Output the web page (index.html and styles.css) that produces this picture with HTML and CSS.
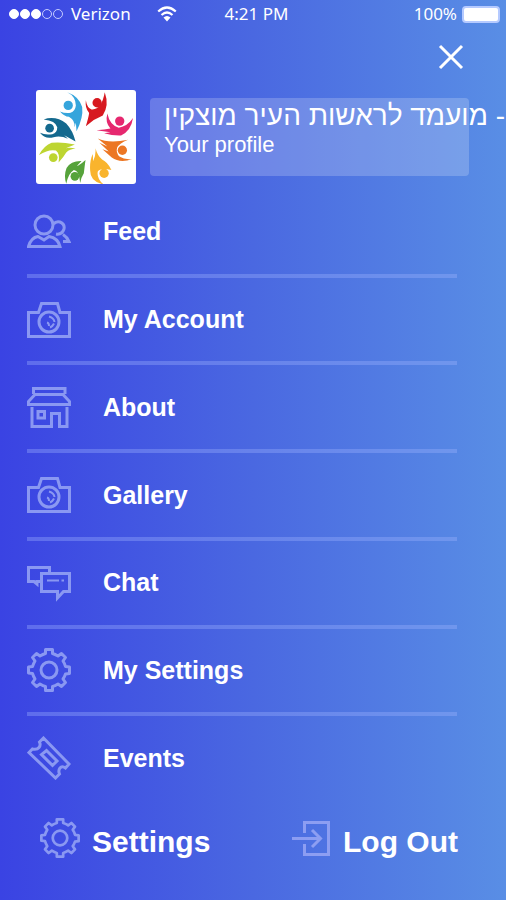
FILE: index.html
```html
<!DOCTYPE html>
<html lang="en">
<head>
<meta charset="utf-8">
<meta name="viewport" content="width=device-width, initial-scale=1">
<title>Menu</title>
<link rel="stylesheet" href="styles.css">
</head>
<body>
<svg class="symbols" aria-hidden="true">
  <symbol id="camera" viewBox="0 0 44 44">
    <path d="M1.5 14.500H11.500L14.500 5.500H30.500L33 14.500H42.500V38.500H1.500Z"/>
    <circle cx="22" cy="24" r="10"/>
    <path d="M22 18.500Q27 20 27.500 24M27 25.500Q25.500 28.500 23 29.500M20 24.500Q22 25 22 28" stroke-width="2"/>
  </symbol>
  <symbol id="gear" viewBox="0 0 44 44">
    <path stroke-linejoin="round" d="M18.500 5.500V1.500H25.500V5.500Q28 6.200 31 8L34.500 5.500L38.500 9.500L36 13Q38 16 38.500 18.500L42.500 19V25.500L38.500 26Q37.500 29 36 31L38.500 34.500L34.500 38.500L31 36Q28 38 25.500 38.500V42.500H18.500V38.500Q16 38 13 36L9.500 38.500L5.500 34.500L8 31Q6.200 28 5.500 25.500L1.500 25V19L5.500 18.500Q6.200 16 8 13L5.500 9.500L9.500 5.500L13 8Q16 6.200 18.500 5.500Z"/>
    <circle cx="22" cy="22" r="8"/>
  </symbol>
</svg>

<header class="status">
  <div class="carrier">
    <span class="signal"><i class="dot full"></i><i class="dot full"></i><i class="dot full"></i><i class="dot"></i><i class="dot"></i></span>
    <span>Verizon</span>
    <svg class="wifi" viewBox="0 0 20 16" aria-hidden="true">
      <path d="M1.200 5.500Q10 -2.500 18.800 5.500M4.500 9Q10 4 15.500 9" fill="none" stroke="#fff" stroke-width="2.200"/>
      <path d="M6.500 11.500Q10 8.500 13.500 11.500L10 15.500Z" fill="#fff"/>
    </svg>
  </div>
  <span class="time">4:21 PM</span>
  <div class="power"><span>100%</span><span class="battery"></span></div>
</header>

<div class="toolbar">
  <button class="close" type="button" aria-label="Close menu">
    <svg viewBox="0 0 26 26"><path d="M2 2L24 24M24 2L2 24" stroke="#fff" stroke-width="3"/></svg>
  </button>
</div>

<a class="profile" href="#profile">
  <svg class="avatar" viewBox="31 29 301 281" preserveAspectRatio="none" aria-hidden="true">
    <g fill="#36a5dc"><circle cx="128" cy="75" r="14"/><path d="M125 36Q150 48 151 75Q149 92 135 97Q118 99 103 93Q116 108 130 109Q149 120 147 140L151 127L153 152Q174 112 170 80Q160 48 125 36Z"/></g>
    <g fill="#d71920"><circle cx="215" cy="67" r="14"/><path d="M181 60Q185 84 198 87Q228 90 238 36Q252 75 232 105L205 119L222 105L181 137Q189 112 191 98Q178 84 181 60Z"/></g>
    <g fill="#e6286f"><circle cx="283" cy="122" r="14"/><path d="M246 99Q252 132 280 142Q306 138 323 113Q317 152 287 165Q262 166 236 158L255 155L213 149Q238 147 255 144Q238 125 246 99Z"/></g>
    <g fill="#ec7623"><circle cx="291" cy="209" r="14"/><path d="M217 174Q250 190 308 178Q282 188 275 202Q271 217 282 228Q298 238 321 235Q285 249 259 231L231 206L250 213L222 187L246 198Z"/></g>
    <g fill="#f9b42d"><circle cx="236" cy="278" r="14"/><path d="M210 203Q212 225 203 242L202 220Q192 240 194 270Q194 304 234 311Q213 292 217 273Q223 261 258 268Q247 245 230 237Q216 225 210 203Z"/></g>
    <g fill="#56a33b"><circle cx="148" cy="287" r="13"/><path d="M180 238Q161 255 154 256L168 241Q136 240 123 262Q114 285 122 309Q129 277 145 268Q161 269 164 307Q167 290 175 278Q177 260 180 238Z"/></g>
    <g fill="#bdd531"><circle cx="83" cy="231" r="13"/><path d="M153 205Q134 200 121 203L148 192Q105 183 78 187Q56 195 40 223Q70 205 91 210Q104 219 99 246Q114 230 122 216Q134 204 153 205Z"/></g>
    <g fill="#14698e"><circle cx="72" cy="143" r="13"/><path d="M54 117Q90 121 95 140Q95 156 80 161Q60 165 43 157Q58 177 84 170Q105 164 127 175L116 164L150 183Q142 150 122 129Q90 105 54 117Z"/></g>
  </svg>
  <span class="card">
    <span class="name" dir="rtl" lang="he">- מועמד לראשות העיר מוצקין</span>
    <span class="caption">Your profile</span>
  </span>
</a>

<nav class="menu" aria-label="Main">
  <ul>
    <li><a href="#feed"><svg class="icon" viewBox="0 0 44 44"><circle cx="17" cy="15" r="9"/><path d="M26.500 14Q29 11 33 12Q38 14 37 19Q35 25 29 24M36 24.500Q40 27 42 31.500H36M1.500 36.500Q4 27.500 11 26.500L17 30L22 26.500Q31 28 33 36.500Z"/></svg>Feed</a></li>
    <li><a href="#account"><svg class="icon"><use href="#camera"/></svg>My Account</a></li>
    <li><a href="#about"><svg class="icon" viewBox="0 0 44 44"><path d="M6.500 9V3.500H38V9M8 9.500H36L42.500 16.500V19.500H1.500V16.500ZM5 22V41.500H24.500V28.500H32.500V41.500H40V22M11 26.500H17.500V33H11Z"/></svg>About</a></li>
    <li><a href="#gallery"><svg class="icon"><use href="#camera"/></svg>Gallery</a></li>
    <li><a href="#chat"><svg class="icon" viewBox="0 0 44 44"><path d="M22.500 11V6.500H1.500V20.500H7L10 23V20.500H14M14.500 12.500H42.500V30.500H36.500L30.500 37V30.500H14.500Z"/><path d="M20 19.500H32M34.500 19.500H37" stroke-width="2"/></svg>Chat</a></li>
    <li><a href="#my-settings"><svg class="icon"><use href="#gear"/></svg>My Settings</a></li>
    <li><a href="#events"><svg class="icon" viewBox="0 0 44 44"><path d="M16.500 2L42 28L38.500 32Q35 29.500 33 32Q31 34.500 32.500 38L28.500 42L2 16.500L5.500 13Q10 14 12 11.500Q14 9 12.500 6ZM19.500 14.500L30 25L25.500 29.500L14.500 18.500Z"/></svg>Events</a></li>
  </ul>
</nav>

<footer class="actions">
  <a href="#settings"><svg class="icon small"><use href="#gear"/></svg>Settings</a>
  <a href="#logout"><svg class="icon small" viewBox="0 0 40 40"><path d="M13.500 15V4.500H37.500V36.500H13.500V26M1 20.500H29M21 12L29.500 20.500L21 29"/></svg>Log Out</a>
</footer>
</body>
</html>
```
FILE: styles.css
```css
* {
  box-sizing: border-box;
}

body {
  display: flex;
  flex-direction: column;
  min-height: 100vh;
  margin: 0;
  overflow-x: hidden;
  background: linear-gradient(to right, #3a43e3, #4a68e1 50%, #598ee5);
  color: #fff;
  font-family: "Liberation Sans", Arial, sans-serif;
}

a {
  color: inherit;
  text-decoration: none;
}

.symbols {
  display: none;
}

.status {
  display: grid;
  grid-template-columns: 1fr auto 1fr;
  align-items: center;
  height: 28px;
  padding: 0 6px 0 9px;
  font: 17px/28px "Noto Sans", sans-serif;
}

.carrier,
.power,
.signal {
  display: flex;
  align-items: center;
}

.carrier {
  gap: 8px;
}

.signal {
  gap: 1px;
}

.dot {
  width: 10px;
  height: 10px;
  border: 1px solid #c5cbff;
  border-radius: 50%;
}

.dot.full {
  border-color: #fff;
  background: #fff;
}

.wifi {
  width: 20px;
  height: 16px;
  margin-left: 18px;
}

.time {
  padding-left: 4px;
}

.power {
  justify-content: flex-end;
  gap: 5px;
}

.battery {
  width: 38px;
  height: 17px;
  border: 2px solid #b5caff;
  border-radius: 4px;
  background: #fff;
}

.toolbar {
  display: flex;
  justify-content: flex-end;
  padding: 16px 42px 0 0;
}

.close {
  width: 26px;
  height: 26px;
  padding: 0;
  border: 0;
  background: none;
}

.close svg {
  display: block;
}

.profile {
  display: flex;
  align-items: flex-start;
  gap: 14px;
  padding: 20px 37px 6px 36px;
}

.avatar {
  flex: none;
  width: 100px;
  height: 94px;
  border-radius: 3px;
  background: #fff;
}

.card {
  display: flex;
  flex: 1;
  flex-direction: column;
  align-items: flex-start;
  min-width: 0;
  height: 78px;
  margin-top: 8px;
  padding: 2px 14px;
  border-radius: 4px;
  background: rgba(255, 255, 255, 0.2);
}

.name {
  font-size: 28px;
  line-height: 32px;
  white-space: nowrap;
}

.caption {
  font-size: 22px;
  line-height: 26px;
}

.menu {
  display: flex;
  flex: 1;
  padding: 0 49px 0 27px;
}

.menu ul {
  display: flex;
  flex: 1;
  flex-direction: column;
  margin: 0;
  padding: 0;
  list-style: none;
}

.menu li {
  display: flex;
  flex: 1;
  border-bottom: 4px solid rgba(160, 180, 255, 0.35);
}

.menu li:last-child {
  border-color: transparent;
}

.menu a {
  display: flex;
  flex: 1;
  align-items: center;
  gap: 32px;
  font-size: 25px;
  font-weight: bold;
}

.icon {
  flex: none;
  width: 44px;
  height: 44px;
  fill: none;
  stroke: #98a6f5;
  stroke-width: 3;
  opacity: 0.85;
}

.icon.small {
  width: 40px;
  height: 40px;
}

.actions {
  display: flex;
  justify-content: space-between;
  height: 96px;
  padding: 14px 48px 0 40px;
}

.actions a {
  display: flex;
  gap: 12px;
  font-size: 30px;
  font-weight: bold;
  line-height: 48px;
  height: 48px;
}
```
